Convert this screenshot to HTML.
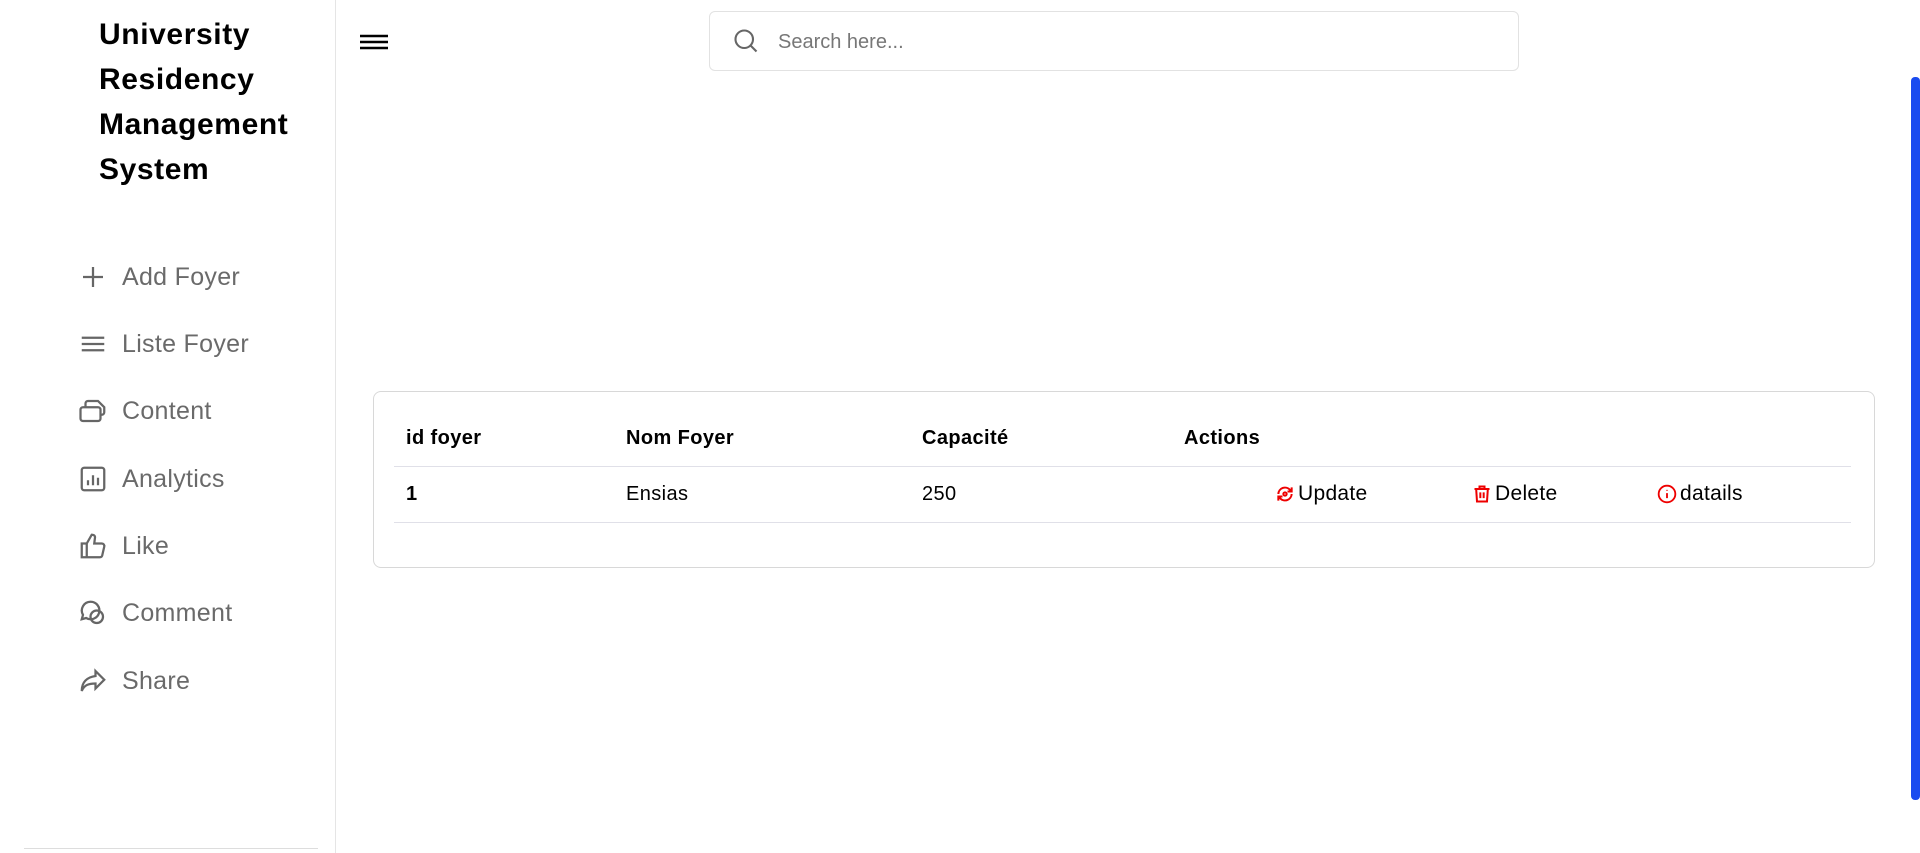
<!DOCTYPE html>
<html><head><meta charset="utf-8"><style>
*{margin:0;padding:0;box-sizing:border-box}
body{width:1920px;height:853px;overflow:hidden;background:#fff;font-family:"Liberation Sans",sans-serif;position:relative}
.side{position:absolute;left:0;top:0;width:336px;height:853px;border-right:1px solid #e5e5e5;background:#fff}
.title{position:absolute;left:99px;top:12px;font-size:30px;font-weight:bold;line-height:45px;color:#000;letter-spacing:0.6px}
.item{position:absolute;left:78px;display:flex;align-items:center;font-size:25px;color:#6a6a6a;letter-spacing:0.3px}
.item svg{width:30px;height:30px;margin-right:14px}
.bot{position:absolute;left:24px;top:848px;width:294px;height:1px;background:#ddd}
.ham{position:absolute;left:359px;top:31px}
.search{position:absolute;left:709px;top:11px;width:810px;height:60px;border:1px solid #e2e2e2;border-radius:6px}
.search svg{position:absolute;left:22px;top:15px}
.search span{position:absolute;left:68px;top:19px;font-size:20px;color:#777}
.card{position:absolute;left:373px;top:391px;width:1502px;height:177px;border:1px solid #d8d8d8;border-radius:8px}
.t{position:absolute;font-size:20px;color:#000;letter-spacing:0.4px}
.h{font-weight:bold}
.line{position:absolute;height:1px;background:#e0e0e8}
.scroll{position:absolute;left:1911px;top:77px;width:9px;height:723px;background:#1a4bf0;border-radius:4px}
.act{position:absolute;display:flex;align-items:center;font-size:21px;color:#000;top:482px;letter-spacing:0.3px}
.act svg{margin-right:3px}
</style></head><body>
<div class="side">
<div class="title">University<br>Residency<br>Management<br>System</div>
<div class="item" style="top:262px"><svg viewBox="0 0 24 24" fill="none" stroke="#666" stroke-width="1.8"><path d="M12 4v16M4 12h16"/></svg>Add Foyer</div>
<div class="item" style="top:329px"><svg viewBox="0 0 24 24" fill="none" stroke="#666" stroke-width="1.8"><path d="M3 7h18M3 12h18M3 17h18"/></svg>Liste Foyer</div>
<div class="item" style="top:396px"><svg viewBox="0 0 24 24" fill="none" stroke="#666" stroke-width="1.8"><rect x="2" y="9" width="16" height="11" rx="2"/><path d="M6 9V6a2 2 0 0 1 2-2h8l5 5v4a2 2 0 0 1-2 2h-1"/></svg>Content</div>
<div class="item" style="top:464px"><svg viewBox="0 0 24 24" fill="none" stroke="#666" stroke-width="1.8"><rect x="3" y="3" width="18" height="18" rx="2"/><path d="M8 17v-4M12 17V9M16 17v-6"/></svg>Analytics</div>
<div class="item" style="top:531px"><svg viewBox="0 0 24 24" fill="none" stroke="#666" stroke-width="1.8"><path d="M7 10v11H3V10zM7 10l4-7c2 0 3 1 2.5 3L13 10h6a2 2 0 0 1 2 2.5l-1.5 6.5a2 2 0 0 1-2 2H7"/></svg>Like</div>
<div class="item" style="top:598px"><svg viewBox="0 0 24 24" fill="none" stroke="#666" stroke-width="1.8"><path d="M10 3a7 7 0 0 0-6 10.5L3 17l3.5-1A7 7 0 1 0 10 3z"/><circle cx="15" cy="15" r="5"/></svg>Comment</div>
<div class="item" style="top:666px"><svg viewBox="0 0 24 24" fill="none" stroke="#666" stroke-width="1.8"><path d="M14 4l7 7-7 7v-4c-5 0-9 1-11 6 0-7 4-11 11-12z"/></svg>Share</div>
<div class="bot"></div>
</div>
<svg class="ham" width="30" height="22" viewBox="0 0 30 22"><path d="M1 5h28M1 11h28M1 17h28" stroke="#000" stroke-width="2.6"/></svg>
<div class="search"><svg width="28" height="28" viewBox="0 0 24 24" fill="none" stroke="#666" stroke-width="1.8"><circle cx="10.5" cy="10.5" r="7.5"/><path d="M16 16l5 5"/></svg><span>Search here...</span></div>
<div class="card"></div>
<div class="t h" style="left:406px;top:427px">id foyer</div>
<div class="t h" style="left:626px;top:427px">Nom Foyer</div>
<div class="t h" style="left:922px;top:427px">Capacité</div>
<div class="t h" style="left:1184px;top:427px">Actions</div>
<div class="line" style="left:394px;top:466px;width:1457px"></div>
<div class="t h" style="left:406px;top:483px">1</div>
<div class="t" style="left:626px;top:483px">Ensias</div>
<div class="t" style="left:922px;top:483px">250</div>
<div class="line" style="left:394px;top:522px;width:1457px"></div>
<div class="act" style="left:1275px"><svg width="20" height="20" viewBox="0 0 24 24" fill="none" stroke="#e00" stroke-width="2.4"><path d="M4 12a8 8 0 0 1 14-5l2 2M20 12a8 8 0 0 1-14 5l-2-2M20 4v5h-5M4 20v-5h5"/><circle cx="12" cy="12" r="2"/></svg>Update</div>
<div class="act" style="left:1472px"><svg width="20" height="20" viewBox="0 0 24 24" fill="none" stroke="#e00" stroke-width="2.4"><path d="M3 6h18M9 6V3h6v3M5 6l1 15h12l1-15M10 10v7M14 10v7"/></svg>Delete</div>
<div class="act" style="left:1657px"><svg width="20" height="20" viewBox="0 0 24 24" fill="none" stroke="#e00" stroke-width="2.2"><circle cx="12" cy="12" r="10"/><path d="M12 11v6M12 7v1"/></svg>datails</div>
<div class="scroll"></div>
</body></html>
